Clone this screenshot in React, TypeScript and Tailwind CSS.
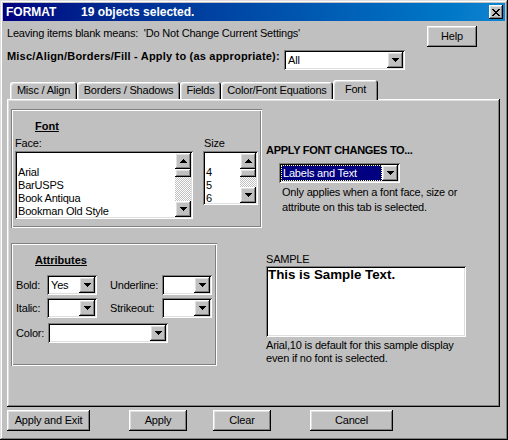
import type { ReactNode } from 'react'

const RAISED = 'shadow-[inset_-1px_-1px_#000,inset_1px_1px_#fff,inset_-2px_-2px_#808080,inset_2px_2px_#dfdfdf]'
const SUNKEN = 'shadow-[inset_1px_1px_#808080,inset_-1px_-1px_#fff,inset_2px_2px_#000,inset_-2px_-2px_#dfdfdf]'
const ETCHED = 'shadow-[inset_1px_1px_#808080,inset_-1px_-1px_#fff,inset_2px_2px_#fff,inset_-2px_-2px_#808080]'

const FACES = ['', 'Arial', 'BarUSPS', 'Book Antiqua', 'Bookman Old Style']
const SIZES = ['', '4', '5', '6']

function Tri({ up }: { up?: boolean }) {
  return (
    <svg width="7" height="4" viewBox="0 0 7 4" shapeRendering="crispEdges" className={up ? 'rotate-180' : ''}>
      <path d="M0 0h7v1h-1v1h-1v1h-1v1h-1v-1h-1v-1h-1v-1h-1z" fill="#000" />
    </svg>
  )
}

function ArrowBtn({ up }: { up?: boolean }) {
  return (
    <div className={`w-[16px] h-[16px] shrink-0 bg-[#c0c0c0] flex items-center justify-center ${RAISED}`}>
      <Tri up={up} />
    </div>
  )
}

function Select({ w, value, focus }: { w: string; value?: string; focus?: boolean }) {
  return (
    <div className={`${w} h-[20px] shrink-0 bg-white p-[2px] flex ${SUNKEN}`}>
      <div
        className={`flex-1 min-w-0 px-[2px] leading-[16px] whitespace-nowrap ${focus ? 'bg-[#000080] text-white outline-1 outline-dotted outline-[#ffff80] -outline-offset-1' : ''}`}
      >
        {value}
      </div>
      <ArrowBtn />
    </div>
  )
}

function Scrollbar() {
  return (
    <div className="w-[16px] flex flex-col">
      <ArrowBtn up />
      <div className={`h-[8px] shrink-0 bg-[#c0c0c0] ${RAISED}`} />
      <div className="flex-1 bg-[image:repeating-conic-gradient(#c0c0c0_0%_25%,#fff_0%_50%)] bg-size-[2px_2px]" />
      <ArrowBtn />
    </div>
  )
}

function ListBox({ w, h, items }: { w: string; h: string; items: string[] }) {
  return (
    <div className={`${w} ${h} bg-white p-[2px] flex ${SUNKEN}`}>
      <div className="flex-1 overflow-hidden px-[1px]">
        {items.map((it, i) => (
          <div key={i} className="h-[13px] leading-[13px] whitespace-nowrap">{it || '\u00a0'}</div>
        ))}
      </div>
      <Scrollbar />
    </div>
  )
}

function Btn({ w, className = '', children }: { w: string; className?: string; children: ReactNode }) {
  return (
    <div className={`${w} h-[21px] shrink-0 flex items-center justify-center bg-[#c0c0c0] ${RAISED} ${className}`}>
      {children}
    </div>
  )
}

function Tab({ label, w, active }: { label: string; w: string; active?: boolean }) {
  if (active) {
    return (
      <div className={`${w} h-[20px] relative z-10 bg-[#c0c0c0] rounded-t-[3px] pb-[2px] flex items-center justify-center shadow-[inset_1px_1px_#fff,inset_-1px_0_#000,inset_-2px_0_#808080,inset_2px_2px_#dfdfdf]`}>
        {label}
      </div>
    )
  }
  return (
    <div className={`${w} h-[17px] mb-[1px] bg-[#c0c0c0] rounded-t-[3px] flex items-center justify-center shadow-[inset_1px_1px_#fff,inset_-1px_0_#000,inset_-2px_0_#808080,inset_2px_2px_#dfdfdf]`}>
      {label}
    </div>
  )
}

export default function App() {
  return (
    <div className="w-[508px] h-[440px] bg-[#c0c0c0] p-[3px] flex flex-col font-['Liberation_Sans',Arial,sans-serif] text-[11px] leading-[13px] tracking-[-0.2px] text-black shadow-[inset_-1px_-1px_#000,inset_1px_1px_#dfdfdf,inset_-2px_-2px_#808080,inset_2px_2px_#fff]">
      {/* Title bar */}
      <div className="h-[18px] shrink-0 flex items-center pl-[3px] pr-[2px] bg-linear-to-r from-[#000080] to-[#1084d0] text-white font-bold text-[12px] tracking-normal">
        <span className="w-[75px]">FORMAT</span>
        <span>19 objects selected.</span>
        <div className={`ml-auto w-[14px] h-[14px] bg-[#c0c0c0] flex items-center justify-center ${RAISED}`}>
          <svg width="8" height="7" viewBox="0 0 8 7" shapeRendering="crispEdges">
            <path d="M0 0h2v1h1v1h2v-1h1v-1h2v1h-1v1h-1v1h-1v1h1v1h1v1h1v1h-2v-1h-1v-1h-2v1h-1v1h-2v-1h1v-1h1v-1h1v-1h-1v-1h-1v-1h-1z" fill="#000" />
          </svg>
        </div>
      </div>

      {/* Row 1 */}
      <div className="mt-[5px] h-[21px] shrink-0 flex items-start">
        <span className="pl-[4px] pt-[1px] whitespace-pre">Leaving items blank means:  'Do Not Change Current Settings'</span>
        <Btn w="w-[50px]" className="ml-auto mr-[28px]">Help</Btn>
      </div>

      {/* Row 2 */}
      <div className="mt-[3px] h-[20px] shrink-0 flex items-start">
        <span className="w-[281px] shrink-0 pl-[4px] font-bold tracking-[0.2px] whitespace-nowrap">Misc/Align/Borders/Fill - Apply to (as appropriate):</span>
        <Select w="w-[121px]" value="All" />
      </div>

      {/* Tabs */}
      <div className="mt-[10px] h-[20px] shrink-0 pl-[7px] flex items-end">
        <Tab w="w-[67px]" label="Misc / Align" />
        <Tab w="w-[103px]" label="Borders / Shadows" />
        <Tab w="w-[41px]" label="Fields" />
        <Tab w="w-[112px]" label="Color/Font Equations" />
        <Tab w="w-[45px]" label="Font" active />
      </div>

      {/* Tab panel */}
      <div className={`-mt-[1px] ml-[4px] w-[493px] h-[308px] shrink-0 flex items-start ${RAISED}`}>
        <div className="ml-[4px] mt-[10px] flex flex-col">
          <div className={`w-[251px] h-[119px] pt-[11px] pl-[4px] ${ETCHED}`}>
            <div className="ml-[20px] font-bold underline tracking-normal">Font</div>
            <div className="mt-[4px] flex">
              <div className="flex flex-col">
                <span>Face:</span>
                <div className="mt-[1px]">
                  <ListBox w="w-[178px]" h="h-[68px]" items={FACES} />
                </div>
              </div>
              <div className="ml-[10px] flex flex-col">
                <span className="pl-[1px]">Size</span>
                <div className="mt-[1px]">
                  <ListBox w="w-[55px]" h="h-[54px]" items={SIZES} />
                </div>
              </div>
            </div>
          </div>

          <div className={`mt-[15px] w-[206px] h-[123px] pt-[11px] pl-[5px] ${ETCHED}`}>
            <div className="ml-[19px] font-bold underline tracking-normal">Attributes</div>
            <div className="mt-[8px] flex items-center">
              <span className="w-[31px]">Bold:</span>
              <Select w="w-[50px]" value="Yes" />
              <span className="ml-[13px] w-[52px]">Underline:</span>
              <Select w="w-[50px]" />
            </div>
            <div className="mt-[3px] flex items-center">
              <span className="w-[31px]">Italic:</span>
              <Select w="w-[50px]" />
              <span className="ml-[13px] w-[52px]">Strikeout:</span>
              <Select w="w-[50px]" />
            </div>
            <div className="mt-[5px] flex items-center">
              <span className="w-[32px]">Color:</span>
              <Select w="w-[120px]" />
            </div>
          </div>
        </div>

        <div className="ml-[4px] mt-[45px] flex flex-col">
          <div className="font-bold tracking-[-0.3px]">APPLY FONT CHANGES TO...</div>
          <div className="ml-[13px] mt-[6px]">
            <Select w="w-[121px]" value="Labels and Text" focus />
          </div>
          <div className="ml-[16px] mt-[2px] leading-[15px]">
            <div>Only applies when a font face, size or</div>
            <div>attribute on this tab is selected.</div>
          </div>
          <div className="mt-[38px]">SAMPLE</div>
          <div className={`w-[200px] h-[71px] bg-white p-[2px] font-bold text-[13.33px] leading-[14px] tracking-normal ${SUNKEN}`}>
            This is Sample Text.
          </div>
          <div className="mt-[2px]">
            <div>Arial,10 is default for this sample display</div>
            <div>even if no font is selected.</div>
          </div>
        </div>
      </div>

      {/* Bottom buttons */}
      <div className="mt-[3px] h-[21px] shrink-0 flex">
        <Btn w="w-[83px]" className="ml-[4px]">Apply and Exit</Btn>
        <Btn w="w-[58px]" className="ml-[39px]">Apply</Btn>
        <Btn w="w-[58px]" className="ml-[26px]">Clear</Btn>
        <Btn w="w-[83px]" className="ml-[39px]">Cancel</Btn>
      </div>
    </div>
  )
}
